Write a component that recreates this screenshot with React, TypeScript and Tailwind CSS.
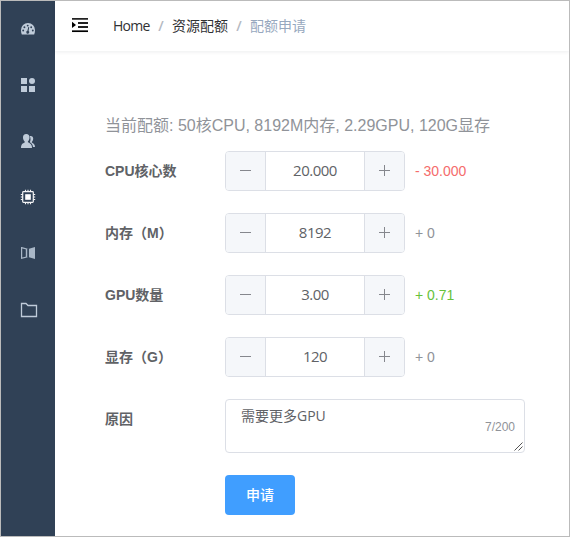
import React from 'react';

const ARIAL = "font-['Liberation_Sans','Noto_Sans_CJK_SC',sans-serif]";
const HUMANIST = "font-['Open_Sans','Noto_Sans_CJK_SC',sans-serif]";

const icons: React.ReactNode[] = [
  <svg key="dashboard" className="size-4" viewBox="0 0 16 16">
    <path
      fill="#bfcbd9"
      d="M8 2a7 7 0 0 0-7 7c0 1.800.3 3.200.8 4.500h12.400c.5-1.300.8-2.700.8-4.500a7 7 0 0 0-7-7z"
    />
    <g fill="#304156">
      <circle cx="3.200" cy="9.500" r=".95" />
      <circle cx="4.400" cy="6.300" r=".95" />
      <circle cx="7.700" cy="4.600" r=".95" />
      <circle cx="11.200" cy="6.300" r=".95" />
      <circle cx="12.800" cy="9.500" r=".95" />
      <path d="M8.300 6l.9.250-.6 3.700a1.500 1.500 0 1 1-1.200-.200z" />
    </g>
  </svg>,
  <svg key="component" className="size-4" viewBox="0 0 16 16" fill="#bfcbd9">
    <path d="M1 1h6v6H1zM1 9h6v6H1zM9 9h6v6H9z" />
    <circle cx="12" cy="4" r="3" />
  </svg>,
  <svg key="people" className="size-4" viewBox="0 0 16 16" fill="#bfcbd9">
    <path d="M6.200 1C8.500 1 9.500 2.500 9.500 4.500c0 1.800-.7 3.200-1.600 4v.8c1.900.9 4.100 1.700 4.100 5.700H1c0-4 1.900-4.800 3.700-5.600v-.9C3.700 7.700 3 6.300 3 4.500 3 2.500 4 1 6.200 1z" />
    <path d="M9.700 3c2.600-.4 3.500 1 3.500 2.600 0 1.500-.6 2.600-1.400 3.300v.7c1.600.8 3.200 1.700 3.200 4.400h-2c-.2-2.800-1.600-3.800-3.200-4.800.8-1.300 1.200-3.900-.1-6.200z" />
  </svg>,
  <svg key="chip" className="size-4" viewBox="0 0 16 16" fill="none" stroke="#f4f4f5">
    <rect x="2.700" y="2.700" width="10.600" height="10.600" rx=".8" strokeWidth="1.200" />
    <rect x="5.200" y="5.200" width="5.600" height="5.600" fill="#fff" stroke="none" />
    <path strokeWidth="1.100" d="M5.500 .8v2M8 .8v2M10.500 .8v2M5.500 13.200v2M8 13.200v2M10.500 13.200v2M.8 5.500h2M.8 8h2M.8 10.500h2M13.200 5.500h2M13.200 8h2M13.200 10.500h2" />
  </svg>,
  <svg key="mirror" className="size-4" viewBox="0 0 16 16">
    <path d="M1.600 2.700L6.400 4v8l-4.800 1.300z" fill="none" stroke="#a9b7c7" strokeWidth="1.200" />
    <path d="M9 3.700L15 2v12l-6-1.700z" fill="#a9b7c7" />
    <path d="M7.700 3v10" stroke="#6c7d90" strokeWidth=".6" />
  </svg>,
  <svg key="folder" className="mt-[2px] h-4 w-[18px]" viewBox="0 0 18 16">
    <path d="M1.500 14.500V1.500H6L8 3.500h8.500v11z" fill="none" stroke="#bfcbd9" strokeWidth="1.300" />
  </svg>,
];

interface Quota {
  label: string;
  value: string;
  diff: string;
  tone: string;
}

const quotas: Quota[] = [
  { label: 'CPU核心数', value: '20.000', diff: '- 30.000', tone: 'text-[#f56c6c]' },
  { label: '内存（M）', value: '8192', diff: '+ 0', tone: 'text-[#909399]' },
  { label: 'GPU数量', value: '3.00', diff: '+ 0.71', tone: 'text-[#67c23a]' },
  { label: '显存（G）', value: '120', diff: '+ 0', tone: 'text-[#909399]' },
];

function Step({ plus }: { plus?: boolean }) {
  return (
    <button
      className={`flex w-10 shrink-0 justify-center border-[#dcdfe6] bg-[#f5f7fa] pt-[13px] ${
        plus ? 'border-l' : 'border-r'
      }`}
    >
      <svg className="size-[11px]" viewBox="0 0 11 11" fill="none" stroke="#85878d" strokeWidth="1">
        <path d={plus ? 'M0 5.500h11M5.500 0v11' : 'M0 5.500h11'} />
      </svg>
    </button>
  );
}

function QuotaRow({ label, value, diff, tone }: Quota) {
  return (
    <div className="mb-[22px] flex h-10">
      <label className="w-[120px] shrink-0 text-sm leading-10 font-bold text-[#606266]">{label}</label>
      <div className="flex w-[180px] overflow-hidden rounded border border-[#dcdfe6]">
        <Step />
        <span className={`${HUMANIST} flex-1 text-center text-[15px] leading-[36px] tracking-[-0.5px] text-[#606266]`}>
          {value}
        </span>
        <Step plus />
      </div>
      <span className={`ml-2.5 text-sm leading-10 ${tone}`}>{diff}</span>
    </div>
  );
}

export default function App() {
  return (
    <div className={`${ARIAL} flex h-[537px] w-[570px] overflow-hidden border border-[#bbb] bg-white`}>
      <aside className="flex w-[54px] shrink-0 flex-col bg-[#304156]">
        {icons.map((icon, i) => (
          <div key={i} className="flex h-14 shrink-0 items-center pl-[19px]">
            {icon}
          </div>
        ))}
      </aside>
      <main className="min-w-0 flex-1">
        <header className="flex h-[50px] items-center pl-[17px] shadow-[0_1px_4px_rgba(0,21,41,0.08)]">
          <svg className="mr-[25px] mb-[2px] h-4 w-4 shrink-0" viewBox="0 0 16 16">
            <path d="M0 1.900h16M6 6h10M6 10h10" stroke="#222" strokeWidth="1.900" />
            <path d="M0 14.200h16" stroke="#000" strokeWidth="1.700" />
            <path d="M0 4.800L4 7.900 0 11z" fill="#000" />
          </svg>
          <nav className={`${HUMANIST} flex text-sm leading-[50px] text-[#303133]`}>
            <span className="w-[37px] tracking-[-0.7px]">Home</span>
            <span className="w-[22px] text-center font-semibold text-[#b4b9c2]">/</span>
            <span>资源配额</span>
            <span className="w-[22px] text-center font-semibold text-[#b4b9c2]">/</span>
            <span className="text-[#97a8be]">配额申请</span>
          </nav>
        </header>
        <form className="pt-[63px] pl-[50px]">
          <p className="h-[37px] text-base leading-6 whitespace-nowrap text-[#909399]">
            当前配额: 50核CPU, 8192M内存, 2.29GPU, 120G显存
          </p>
          {quotas.map((q) => (
            <QuotaRow key={q.label} {...q} />
          ))}
          <div className="mb-[22px] flex h-[54px]">
            <label className="w-[120px] shrink-0 text-sm leading-10 font-bold text-[#606266]">原因</label>
            <div className="relative w-[300px] rounded border border-[#dcdfe6] px-[15px] pt-[5px]">
              <p className={`${HUMANIST} text-sm leading-[21px] text-[#606266]`}>需要更多GPU</p>
              <span className="absolute right-[9px] bottom-[18px] text-xs leading-[14px] text-[#909399]">7/200</span>
              <svg className="absolute right-px bottom-px size-[9px]" viewBox="0 0 9 9">
                <path d="M.5 8.500l8-8M4.500 8.500l4-4" stroke="#555" strokeWidth="1" />
              </svg>
            </div>
          </div>
          <button className="ml-[120px] h-10 w-[70px] rounded bg-[#409eff] text-sm font-medium text-white">申请</button>
        </form>
      </main>
    </div>
  );
}
